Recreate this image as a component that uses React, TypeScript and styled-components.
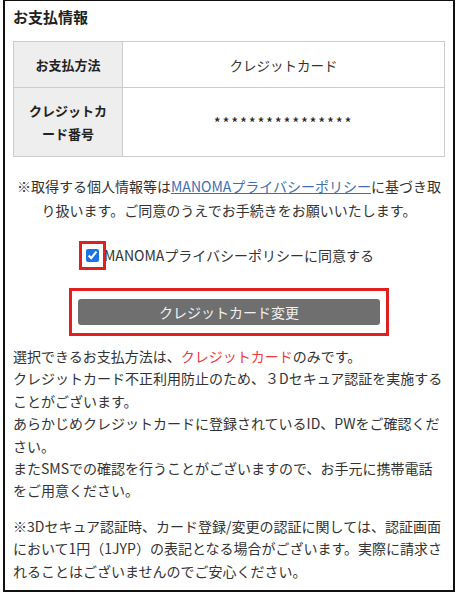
import React from "react";
import styled, { createGlobalStyle } from "styled-components";

const GlobalStyle = createGlobalStyle`
  body {
    margin: 0;
    background: #fff;
    font-family: "Noto Sans CJK JP", "Noto Sans", sans-serif;
    color: #333;
  }
`;

const Panel = styled.div`
  box-sizing: border-box;
  width: 452px;
  margin-left: 3px;
  border: 2px solid #111;
  border-top-width: 1px;
  padding: 4px 8px 8px 8px;
`;

const Title = styled.h2`
  margin: 0;
  font-size: 15px;
  font-weight: bold;
  line-height: 24px;
  color: #222;
`;

const InfoTable = styled.table`
  width: 100%;
  margin-top: 12px;
  border-collapse: collapse;
  font-size: 13px;
`;

const Th = styled.th`
  width: 88px;
  padding: 0 10px;
  background: #eeeeee;
  border: 1px solid #cccccc;
  font-weight: bold;
  line-height: 23px;
  color: #222;
  text-align: center;
`;

const Td = styled.td<{ $h: number }>`
  height: ${(p) => p.$h}px;
  border: 1px solid #cccccc;
  text-align: center;
  font-size: 13.5px;
  color: #333;
`;

const Mask = styled.span`
  font-size: 15px;
  letter-spacing: 1.7px;
  color: #222;
`;

const Note = styled.p`
  margin: 17px 0 0;
  font-size: 14px;
  line-height: 24px;
  text-align: center;
`;

const PolicyLink = styled.a`
  color: #3f6fae;
  text-decoration: underline;
`;

const AgreeRow = styled.label`
  display: flex;
  justify-content: center;
  align-items: center;
  margin-top: 19px;
  padding-right: 5px;
  font-size: 14px;
  line-height: 29px;
`;

const CheckFrame = styled.span`
  box-sizing: border-box;
  display: flex;
  align-items: center;
  justify-content: center;
  width: 27px;
  height: 29px;
  margin-right: -2px;
  border: 3px solid #e21f1f;
  input {
    margin: 0;
    width: 13px;
    height: 13px;
    accent-color: #1a73e8;
  }
`;

const ButtonFrame = styled.div`
  box-sizing: border-box;
  width: 320px;
  margin: 18px auto 0;
  padding: 8px 6px;
  border: 3px solid #e21f1f;
`;

const ChangeButton = styled.button`
  display: block;
  width: 100%;
  height: 26px;
  border: none;
  border-radius: 3px;
  background: #6f6f6f;
  color: #f2f2f2;
  font-family: inherit;
  font-size: 14px;
  cursor: pointer;
`;

const Body = styled.p<{ $gap: number }>`
  margin: ${(p) => p.$gap}px 0 0;
  font-size: 14px;
  line-height: 22.4px;
  color: #333;
`;

const Red = styled.span`
  color: #ee3a3a;
`;

export default function App() {
  return (
    <>
      <GlobalStyle />
      <Panel>
        <Title>お支払情報</Title>
        <InfoTable>
          <tbody>
            <tr>
              <Th>お支払方法</Th>
              <Td $h={43}>クレジットカード</Td>
            </tr>
            <tr>
              <Th>クレジットカード番号</Th>
              <Td $h={66}>
                <Mask>****************</Mask>
              </Td>
            </tr>
          </tbody>
        </InfoTable>
        <Note>
          ※取得する個人情報等は<PolicyLink href="#">MANOMAプライバシーポリシー</PolicyLink>
          に基づき取り扱います。ご同意のうえでお手続きをお願いいたします。
        </Note>
        <AgreeRow>
          <CheckFrame>
            <input type="checkbox" defaultChecked />
          </CheckFrame>
          MANOMAプライバシーポリシーに同意する
        </AgreeRow>
        <ButtonFrame>
          <ChangeButton type="button">クレジットカード変更</ChangeButton>
        </ButtonFrame>
        <Body $gap={9}>
          選択できるお支払方法は、<Red>クレジットカード</Red>のみです。
          <br />
          クレジットカード不正利用防止のため、３Dセキュア認証を実施することがございます。
          <br />
          あらかじめクレジットカードに登録されているID、PWをご確認ください。
          <br />
          またSMSでの確認を行うことがございますので、お手元に携帯電話をご用意ください。
        </Body>
        <Body $gap={13}>
          ※3Dセキュア認証時、カード登録/変更の認証に関しては、認証画面において1円（1JYP）の表記となる場合がございます。実際に請求されることはございませんのでご安心ください。
        </Body>
      </Panel>
    </>
  );
}
